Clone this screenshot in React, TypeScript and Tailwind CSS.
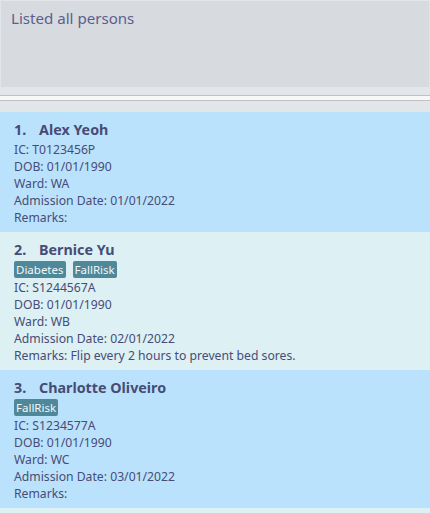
import React from 'react';

type Person = {
  name: string;
  tags: string[];
  ic: string;
  dob: string;
  ward: string;
  admission: string;
  remarks: string;
};

const persons: Person[] = [
  { name: 'Alex Yeoh', tags: [], ic: 'T0123456P', dob: '01/01/1990', ward: 'WA', admission: '01/01/2022', remarks: '' },
  { name: 'Bernice Yu', tags: ['Diabetes', 'FallRisk'], ic: 'S1244567A', dob: '01/01/1990', ward: 'WB', admission: '02/01/2022', remarks: 'Flip every 2 hours to prevent bed sores.' },
  { name: 'Charlotte Oliveiro', tags: ['FallRisk'], ic: 'S1234577A', dob: '01/01/1990', ward: 'WC', admission: '03/01/2022', remarks: '' },
  { name: 'David Li', tags: [], ic: 'S1111111A', dob: '01/01/1990', ward: 'WD', admission: '04/01/2022', remarks: '' },
];

function PersonCard({ p, index }: { p: Person; index: number }) {
  const bg = index % 2 === 0 ? 'bg-[#bbe2fc]' : 'bg-[#ddf0f4]';
  return (
    <div className={`${bg} pl-[14px] pt-[7px] pb-[6px] text-[#474c75]`}>
      <div className="flex text-[14.3px] font-bold leading-[21px]">
        <span className="w-[25px]">{index + 1}.</span>
        <span>{p.name}</span>
      </div>
      {p.tags.length > 0 && (
        <div className="flex gap-[7px] mt-[1px] mb-[1px]">
          {p.tags.map((t) => (
            <span key={t} className="bg-[#4e8899] text-[#f2f6f8] text-[11.5px] leading-[17px] px-[2px] rounded-[2px]">
              {t}
            </span>
          ))}
        </div>
      )}
      <div className="text-[12.2px] leading-[17px] mt-[1px]">
        <div>IC: {p.ic}</div>
        <div>DOB: {p.dob}</div>
        <div>Ward: {p.ward}</div>
        <div>Admission Date: {p.admission}</div>
        <div>Remarks: {p.remarks}</div>
      </div>
    </div>
  );
}

export default function App() {
  return (
    <div
      className="w-[430px] h-[513px] overflow-hidden bg-[#e2e5e9]"
      style={{ fontFamily: '"Noto Sans", "Open Sans", sans-serif' }}
    >
      <div className="pt-[1px] px-[1px]">
        <div className="h-[86px] bg-[#d7dadf] px-[10px] pt-[6px] text-[15.1px] text-[#5b5f90]">
          Listed all persons
        </div>
      </div>
      <div className="h-[8px]" />
      <div className="h-[6px] border-t border-b border-[#bfc1c5] bg-[#f7f7f8]" />
      <div className="h-[11px]" />
      <div>
        {persons.map((p, i) => (
          <PersonCard key={p.name} p={p} index={i} />
        ))}
      </div>
    </div>
  );
}
